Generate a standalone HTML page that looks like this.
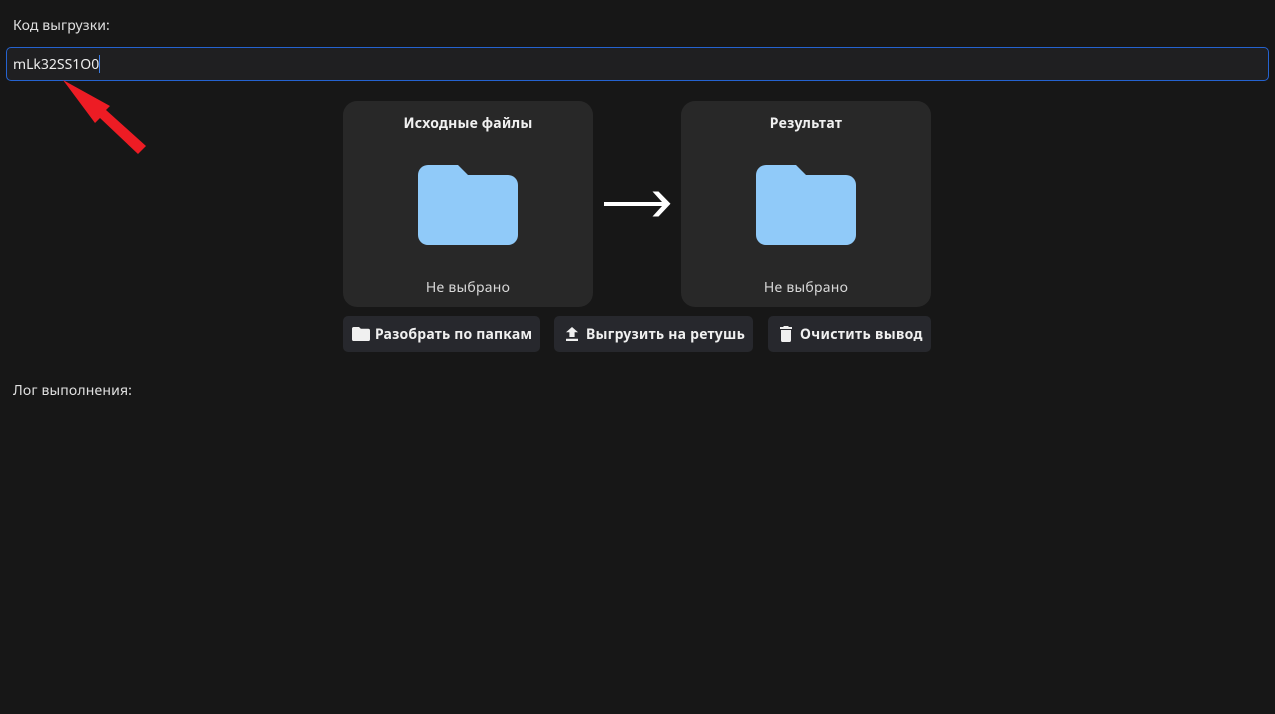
<!DOCTYPE html>
<html lang="ru">
<head>
<meta charset="utf-8">
<style>
html,body{margin:0;padding:0;background:#171717;width:1275px;height:714px;overflow:hidden}
body{position:relative;font-family:"Noto Sans","Liberation Sans","DejaVu Sans",sans-serif;color:#e0e0e0;font-size:14px}
.t{position:absolute;white-space:nowrap;line-height:20px;letter-spacing:.15px}
.c{text-align:center}
.b{font-weight:700;color:#f0f0f0}
.input{position:absolute;left:6px;top:47px;width:1261px;height:32px;border:1px solid #2563d0;border-radius:5px;background:#1f1f21}
.caret{position:absolute;left:99px;top:55px;width:1px;height:18px;background:#3b7be0}
.card{position:absolute;top:101px;width:250px;height:206px;background:#282828;border-radius:14px}
.btn{position:absolute;top:316px;height:36px;background:#27282d;border-radius:5px}
svg{position:absolute}
</style>
</head>
<body>
<div class="t" style="left:13px;top:16px;letter-spacing:.12px">Код выгрузки:</div>
<div class="input"></div>
<div class="t" style="left:13px;top:55px;color:#eee;letter-spacing:0">mLk32SS1O0</div>
<div class="caret"></div>

<div class="card" style="left:343px"></div>
<div class="card" style="left:681px"></div>
<div class="t c b" style="left:343px;width:250px;top:114px;letter-spacing:.18px">Исходные файлы</div>
<div class="t c b" style="left:681px;width:250px;top:114px;letter-spacing:.32px">Результат</div>

<svg style="left:418px;top:165px" width="100" height="80" viewBox="0 0 100 80"><path fill="#90caf9" d="M10 0H40L50 10H90A10 10 0 0 1 100 20V70A10 10 0 0 1 90 80H10A10 10 0 0 1 0 70V10A10 10 0 0 1 10 0Z"/></svg>
<svg style="left:756px;top:165px" width="100" height="80" viewBox="0 0 100 80"><path fill="#90caf9" d="M10 0H40L50 10H90A10 10 0 0 1 100 20V70A10 10 0 0 1 90 80H10A10 10 0 0 1 0 70V10A10 10 0 0 1 10 0Z"/></svg>

<div class="t c" style="left:343px;width:250px;top:278px;color:#d8d8d8;letter-spacing:.25px">Не выбрано</div>
<div class="t c" style="left:681px;width:250px;top:278px;color:#d8d8d8;letter-spacing:.25px">Не выбрано</div>

<svg style="left:603px;top:190px" width="70" height="28" viewBox="0 0 70 28"><path fill="#fff" d="M1 12H59L49.500 1.500H55.500L67.500 13.800L55.500 26.500H49.500L59 16H1Z"/></svg>

<svg style="left:63px;top:80px" width="85" height="76" viewBox="0 0 85 76"><path fill="#ed1c24" d="M0 0L47 26L43 30L83 66L75 74L37 38L32 43Z"/></svg>

<div class="btn" style="left:343px;width:197px"></div>
<div class="btn" style="left:554px;width:199px"></div>
<div class="btn" style="left:768px;width:163px"></div>

<svg style="left:352px;top:327px" width="18" height="14" viewBox="0 0 18 14"><path fill="#f0f0f0" d="M1.800 0H7L8.800 1.800H16.200A1.800 1.800 0 0 1 18 3.600V12.200A1.800 1.800 0 0 1 16.200 14H1.800A1.800 1.800 0 0 1 0 12.200V1.800A1.800 1.800 0 0 1 1.800 0Z"/></svg>
<svg style="left:566px;top:327px" width="12" height="14" viewBox="0 0 12 14"><path fill="#f0f0f0" d="M3.400 10V5.300H0L6 0L12 5.300H8.600V10ZM0 11.800H12V14H0Z"/></svg>
<svg style="left:780px;top:326px" width="12" height="16" viewBox="0 0 12 16"><path fill="#f0f0f0" d="M4 0H8L9 1H12V3H0V1H3ZM1 4H11V14.200A1.800 1.800 0 0 1 9.200 16H2.800A1.800 1.800 0 0 1 1 14.200Z"/></svg>

<div class="t b" style="left:375px;top:325px;letter-spacing:.18px">Разобрать по папкам</div>
<div class="t b" style="left:586px;top:325px;letter-spacing:.23px">Выгрузить на ретушь</div>
<div class="t b" style="left:800px;top:325px;letter-spacing:.33px">Очистить вывод</div>

<div class="t" style="left:13px;top:381px">Лог выполнения:</div>
</body>
</html>
